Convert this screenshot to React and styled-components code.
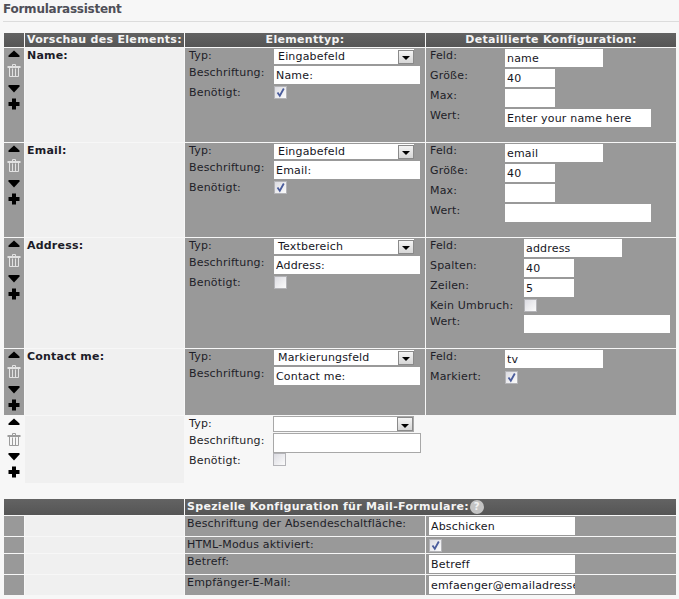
import React from 'react';
import styled, { createGlobalStyle } from 'styled-components';

const GlobalStyle = createGlobalStyle`
  html, body {
    margin: 0;
    background: #f7f7f7;
    overflow: hidden;
  }
  body {
    font-family: "DejaVu Sans", Verdana, sans-serif;
    font-size: 11px;
    line-height: 14px;
    color: #222;
  }
`;

const Page = styled.div`
  width: 679px;
  height: 599px;
  padding: 0 4px;
  box-sizing: border-box;
`;

const Title = styled.h1`
  margin: 0 -4px 11px -1px;
  height: 22px;
  padding-top: 2px;
  box-sizing: border-box;
  font-size: 12px;
  line-height: 14px;
  font-weight: bold;
  letter-spacing: -0.25px;
  color: #4f4f58;
  border-bottom: 1px solid #dcdcdc;
`;

const Table = styled.div`
  display: grid;
  grid-template-columns: 20px 159px 240px 250px;
  grid-template-rows: ${({ $rows }) => $rows};
  gap: 1px;
  margin-bottom: ${({ $mb }) => $mb || 0}px;
`;

const HeadCell = styled.div`
  grid-column: ${({ $span }) => ($span ? `span ${$span}` : 'auto')};
  background: linear-gradient(#636363, #555);
  color: #f4f4f4;
  font-weight: bold;
  letter-spacing: 0.3px;
  line-height: 14px;
  padding-left: ${({ $pad }) => $pad || 0}px;
  text-align: ${({ $center }) => ($center ? 'center' : 'left')};
  white-space: nowrap;
  display: ${({ $flex }) => ($flex ? 'flex' : 'block')};
  align-items: center;
`;

const Handle = styled.div`
  background: ${({ $plain }) => ($plain ? 'transparent' : '#999')};
  display: flex;
  flex-direction: column;
  align-items: center;
  padding-top: 2px;
`;

const Preview = styled.div`
  background: #f0f0f0;
  font-weight: bold;
  letter-spacing: 0.2px;
  padding: 1px 0 0 2px;
  color: #1c1c28;
`;

const Cell = styled.div`
  background: ${({ $plain }) => ($plain ? 'transparent' : '#999')};
  padding: ${({ $pad }) => $pad || '0'};
  min-width: 0;
`;

const Fields = styled.div`
  display: grid;
  grid-template-columns: ${({ $label }) => $label}px 1fr;
  align-items: start;
  justify-items: start;
  row-gap: ${({ $gap }) => ($gap === undefined ? 2 : $gap)}px;
  padding: ${({ $pad }) => $pad};
`;

const Label = styled.div`
  margin-top: ${({ $top }) => $top || 0}px;
  white-space: nowrap;
  letter-spacing: 0.18px;
  color: #1e1e28;
`;

const TextInput = styled.input.attrs({ type: 'text', readOnly: true })`
  display: block;
  width: ${({ $w }) => $w}px;
  height: ${({ $h }) => $h || 18}px;
  box-sizing: border-box;
  margin: 0;
  padding: 0 0 0 2px;
  border: ${({ $outlined }) => ($outlined ? '1px solid #a8a8a8' : '0')};
  border-radius: 0;
  outline: 0;
  background: #fff;
  font: 11px "DejaVu Sans", Verdana, sans-serif;
  letter-spacing: 0.18px;
  color: #16161e;
`;

const SelectBox = styled.div`
  display: flex;
  align-items: center;
  width: ${({ $w }) => $w}px;
  height: ${({ $h }) => $h || 15}px;
  box-sizing: border-box;
  border: ${({ $outlined }) => ($outlined ? '1px solid #a8a8a8' : '0')};
  background: #fff;
  padding-left: 4px;
  letter-spacing: 0.18px;
  color: #16161e;
`;

const SelectValue = styled.span`
  flex: 1;
  padding-top: 1px;
`;

const SelectArrow = styled.span`
  display: flex;
  align-items: center;
  justify-content: center;
  width: 16px;
  height: 14px;
  box-sizing: border-box;
  border: 1px solid #8a8a8a;
  background: linear-gradient(#f4f4f4, #d6d6d6);
`;

const CheckBox = styled.span`
  display: block;
  width: 13px;
  height: 13px;
  box-sizing: border-box;
  margin-top: ${({ $top }) => $top || 0}px;
  border: 1px solid #b4b4b8;
  background: linear-gradient(135deg, #dcdce2, #fbfbfb);
`;

const HelpBadge = styled.span`
  display: inline-flex;
  align-items: center;
  justify-content: center;
  width: 14px;
  height: 14px;
  margin-left: 1px;
  border-radius: 50%;
  background: #c4c4c4;
  color: #f2f2f2;
  font-size: 10px;
  line-height: 14px;
`;

const Icon = styled.svg`
  display: block;
  flex: none;
  margin-top: ${({ $top }) => $top || 0}px;
`;

const UpIcon = () => (
  <Icon width="12" height="7" viewBox="0 0 12 7">
    <path d="M6 .5 11.5 5.5V7H.5V5.5Z" fill="#000" />
  </Icon>
);

const DownIcon = ({ top }) => (
  <Icon $top={top} width="12" height="8" viewBox="0 0 12 8">
    <path d="M.5 0H11.5V1.5L6 7.5.5 1.5Z" fill="#000" />
  </Icon>
);

const PlusIcon = ({ top }) => (
  <Icon $top={top} width="12" height="12" viewBox="0 0 12 12">
    <path d="M4 .5H8V4H11.5V8H8V11.5H4V8H.5V4H4Z" fill="#000" />
  </Icon>
);

const TrashIcon = ({ top, color }) => (
  <Icon $top={top} width="14" height="13" viewBox="0 0 14 13">
    <path d="M5.5 2V.5H8.5V2" fill="none" stroke={color} />
    <path d="M.5 2H13.5V4H.5Z" fill={color} />
    <path d="M2.5 4V12.5H11.5V4M5.5 4.5V12M8.5 4.5V12" fill="none" stroke={color} />
  </Icon>
);

const CheckMark = () => (
  <svg width="11" height="11" viewBox="0 0 11 11" style={{ display: 'block' }}>
    <path d="M2.5 5.5 4.8 8.8 8.8 1.5" fill="none" stroke="#4a5c9c" strokeWidth="1.8" />
  </svg>
);

const Check = ({ checked, top }) => <CheckBox $top={top}>{checked && <CheckMark />}</CheckBox>;

const ArrowDown = () => (
  <svg width="8" height="4" viewBox="0 0 8 4" style={{ marginTop: 3 }}>
    <path d="M0 0H8L4 4Z" fill="#000" />
  </svg>
);

const Select = ({ value, width, height, outlined }) => (
  <SelectBox $w={width} $h={height} $outlined={outlined}>
    <SelectValue>{value}</SelectValue>
    <SelectArrow>
      <ArrowDown />
    </SelectArrow>
  </SelectBox>
);

const Tools = ({ plain, trashTop = 7, downTop = 8, plusTop = 5 }) => (
  <Handle $plain={plain}>
    <UpIcon />
    <TrashIcon top={trashTop} color={plain ? '#9c9c9c' : '#e2e2e2'} />
    <DownIcon top={downTop} />
    <PlusIcon top={plusTop} />
  </Handle>
);

const TypeCell = ({ type, label, required, noRequired }) => (
  <Cell>
    <Fields $label={85} $pad="1px 0 0 4px">
      <Label>Typ:</Label>
      <Select value={type} width={140} />
      <Label>Beschriftung:</Label>
      <TextInput $w={146} defaultValue={label} />
      {!noRequired && <Label>Benötigt:</Label>}
      {!noRequired && <Check checked={required} />}
    </Fields>
  </Cell>
);

const ConfigCell = ({ labelWidth = 75, children }) => (
  <Cell>
    <Fields $label={labelWidth} $pad="1px 0 0 4px">
      {children}
    </Fields>
  </Cell>
);

const MailRow = ({ label, children }) => (
  <>
    <Handle />
    <Preview />
    <Cell $pad="1px 0 0 2px">
      <Label>{label}</Label>
    </Cell>
    <Cell $pad="1px 0 0 3px">{children}</Cell>
  </>
);

export default function App() {
  return (
    <Page>
      <GlobalStyle />
      <Title>Formularassistent</Title>

      <Table $rows="14px 94px 94px 110px 66px 67px" $mb={16}>
        <HeadCell />
        <HeadCell $pad={2}>Vorschau des Elements:</HeadCell>
        <HeadCell $center>Elementtyp:</HeadCell>
        <HeadCell $center>Detaillierte Konfiguration:</HeadCell>

        <Tools />
        <Preview>Name:</Preview>
        <TypeCell type="Eingabefeld" label="Name:" required />
        <ConfigCell>
          <Label>Feld:</Label>
          <TextInput $w={98} defaultValue="name" />
          <Label>Größe:</Label>
          <TextInput $w={50} defaultValue="40" />
          <Label>Max:</Label>
          <TextInput $w={50} defaultValue="" />
          <Label>Wert:</Label>
          <TextInput $w={146} defaultValue="Enter your name here" />
        </ConfigCell>

        <Tools />
        <Preview>Email:</Preview>
        <TypeCell type="Eingabefeld" label="Email:" required />
        <ConfigCell>
          <Label>Feld:</Label>
          <TextInput $w={98} defaultValue="email" />
          <Label>Größe:</Label>
          <TextInput $w={50} defaultValue="40" />
          <Label>Max:</Label>
          <TextInput $w={50} defaultValue="" />
          <Label>Wert:</Label>
          <TextInput $w={146} defaultValue="" />
        </ConfigCell>

        <Tools />
        <Preview>Address:</Preview>
        <TypeCell type="Textbereich" label="Address:" />
        <ConfigCell labelWidth={94}>
          <Label>Feld:</Label>
          <TextInput $w={98} defaultValue="address" />
          <Label>Spalten:</Label>
          <TextInput $w={50} defaultValue="40" />
          <Label>Zeilen:</Label>
          <TextInput $w={50} defaultValue="5" />
          <Label>Kein Umbruch:</Label>
          <Check />
          <Label>Wert:</Label>
          <TextInput $w={146} defaultValue="" />
        </ConfigCell>

        <Tools />
        <Preview>Contact me:</Preview>
        <TypeCell type="Markierungsfeld" label="Contact me:" noRequired />
        <ConfigCell>
          <Label>Feld:</Label>
          <TextInput $w={98} defaultValue="tv" />
          <Label>Markiert:</Label>
          <Check checked top={1} />
        </ConfigCell>

        <Tools plain trashTop={8} downTop={7} plusTop={5} />
        <Preview />
        <Cell $plain>
          <Fields $label={84} $gap={1} $pad="0 0 0 4px">
            <Label $top={1}>Typ:</Label>
            <Select value="" width={141} height={16} outlined />
            <Label $top={1}>Beschriftung:</Label>
            <TextInput $w={148} $h={20} $outlined defaultValue="" />
            <Label>Benötigt:</Label>
            <Check top={-1} />
          </Fields>
        </Cell>
        <Cell $plain />
      </Table>

      <Table $rows="16px 20px 16px 20px 20px">
        <HeadCell $span={2} />
        <HeadCell $span={2} $pad={2} $flex>
          Spezielle Konfiguration für Mail-Formulare:
          <HelpBadge>?</HelpBadge>
        </HeadCell>

        <MailRow label="Beschriftung der Absendeschaltfläche:">
          <TextInput $w={146} defaultValue="Abschicken" />
        </MailRow>
        <MailRow label="HTML-Modus aktiviert:">
          <Check checked top={1} />
        </MailRow>
        <MailRow label="Betreff:">
          <TextInput $w={146} defaultValue="Betreff" />
        </MailRow>
        <MailRow label="Empfänger-E-Mail:">
          <TextInput $w={146} defaultValue="emfaenger@emailadresse.de" />
        </MailRow>
      </Table>
    </Page>
  );
}
